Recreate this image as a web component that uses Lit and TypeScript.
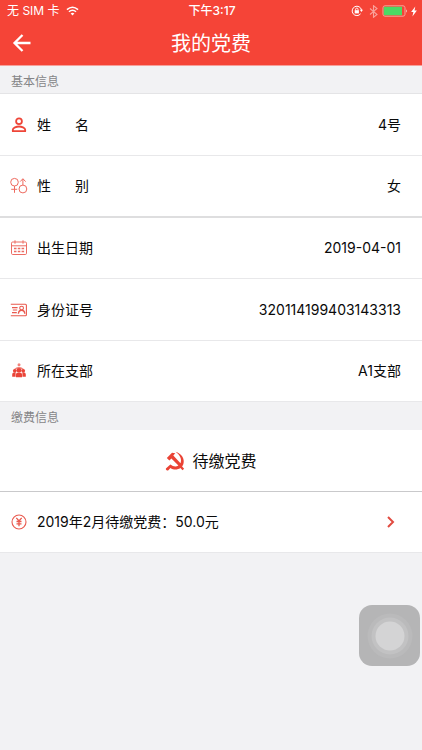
import { LitElement, html, css, svg } from "lit";
import { customElement } from "lit/decorators.js";
import { classMap } from "lit/directives/class-map.js";

type IconName = "person" | "gender" | "calendar" | "card" | "group" | "yen";

interface Field {
  icon: IconName;
  label: string[];
  value: string;
  tall?: boolean;
  band?: boolean;
}

const icons = {
  person: svg`<g fill="none" stroke="#ee4538" stroke-width="1.8"><circle cx="9" cy="5.2" r="2.9"/><path d="M2.800 15.200v-1.500c0-2.100 3.800-3.200 6.200-3.200s6.200 1.100 6.200 3.200v1.500z" stroke-linejoin="round"/></g>`,
  gender: svg`<g fill="none" stroke="#ee6a5f" stroke-width="1"><circle cx="4.500" cy="5.200" r="3.800"/><path d="M4.500 9v6.800M1.200 12.300h6"/><circle cx="12.900" cy="12" r="3.900"/><path d="M12.900 8V2M10.200 4.600l2.700-2.900 2.700 2.900"/></g>`,
  calendar: svg`<g fill="none" stroke="#ec6c63" stroke-width="1"><rect x="1.500" y="3" width="15" height="12.500" rx="1.200"/><path d="M1.500 6.800h15M5 1.300v3.400M13 1.300v3.400"/><path d="M4 9.600h10.500M4 12.400h10.500" stroke-width="1.500" stroke-dasharray="2.500 1.300"/></g>`,
  card: svg`<g fill="none" stroke="#e9594e" stroke-width="1.1"><path d="M.8 3.200h14.600q1 0 1 1v9.600q0 1-1 1H.8M2 6.600h5.600M2.800 9h4.400M2 11.600h4.800"/><circle cx="11.600" cy="7.100" r="1.900"/><path d="M8.400 12.800c.2-2.200 1.200-3.500 3.200-3.500s3 1.300 3.200 3.500" stroke-width="1.400"/></g>`,
  group: svg`<g fill="#ea4438"><circle cx="9" cy="2.800" r="1.500" fill="#f0837b"/><path d="M3.800 7.200Q9 2.200 14.200 7.200l-1 .8Q9 5 4.800 8z" fill="#f0837b"/><circle cx="4.800" cy="8.800" r="1.900"/><circle cx="13.200" cy="8.800" r="1.900"/><circle cx="9" cy="8.300" r="2.400"/><path d="M2.200 14.800v-2.400q0-1.800 1.800-1.800h1.600v4.200zM12.400 10.600H14q1.800 0 1.800 1.800v2.400h-3.400zM6 15.200v-2.800q0-1.600 1.400-1.600h3.200q1.400 0 1.400 1.600v2.800z"/></g>`,
  yen: svg`<g fill="none" stroke="#e9594e"><circle cx="9" cy="9" r="7" stroke-width="1.100"/><path d="M6.300 4.800L9 8l2.700-3.200M9 8v5.200M6.500 8.500h5M6.500 10.800h5" stroke-width="1.300"/></g>`,
};

const fields: Field[] = [
  { icon: "person", label: ["姓", "名"], value: "4号", tall: true },
  { icon: "gender", label: ["性", "别"], value: "女", tall: true, band: true },
  { icon: "calendar", label: ["出生日期"], value: "2019-04-01" },
  { icon: "card", label: ["身份证号"], value: "320114199403143313", tall: true },
  { icon: "group", label: ["所在支部"], value: "A1支部" },
];

@customElement("app-root")
export class AppRoot extends LitElement {
  static styles = css`
    :host {
      display: block;
      min-height: 100vh;
      background: #f2f2f4;
      color: #0a0a0a;
      font-family: Inter, "Noto Sans CJK SC", sans-serif;
      font-size: 14px;
      line-height: 20px;
    }
    * { box-sizing: border-box; }
    svg { display: block; flex: none; }
    h1, h2, h3, dl, dt, dd { margin: 0; font-weight: 400; }
    .top {
      background: #f54437;
      color: #fff;
      border-bottom: 1px solid #f6a09a;
    }
    .status {
      display: grid;
      grid-template-columns: 1fr auto 1fr;
      align-items: center;
      height: 20px;
      padding: 2px 5px 0 7px;
      font-size: 12px;
      line-height: 18px;
    }
    .carrier, .indicators { display: flex; align-items: center; gap: 6px; }
    .indicators { justify-content: flex-end; gap: 3px; }
    .time { font-weight: 500; }
    .nav {
      display: grid;
      grid-template-columns: 44px 1fr 44px;
      align-items: center;
      height: 45px;
    }
    .nav h1 { padding-top: 2px; text-align: center; font-size: 20px; line-height: 28px; }
    .back {
      display: grid;
      place-items: center;
      height: 44px;
      padding: 0;
      border: 0;
      background: none;
      color: inherit;
    }
    .heading {
      height: 28px;
      padding: 6px 11px 0;
      border-bottom: 1px solid #e4e4e6;
      color: #858587;
      font-size: 12px;
      line-height: 20px;
    }
    section + section .heading { border-bottom-color: transparent; }
    .row {
      display: flex;
      align-items: center;
      gap: 9px;
      width: 100%;
      height: 61px;
      padding: 0 21px 0 10px;
      background: #fff;
      border-bottom: 1px solid #e8e8ea;
      color: inherit;
      text-decoration: none;
    }
    .tall { height: 62px; }
    .band { border-bottom: 2px solid #dededf; }
    .label { display: flex; justify-content: space-between; width: 56px; }
    .split { width: 52px; }
    .value { margin-left: auto; }
    .grow { flex: 1; }
    .center {
      justify-content: center;
      gap: 7px;
      padding: 0 10px;
      border-bottom-color: #c9c9cb;
    }
    .center h3 { font-size: 16px; line-height: 24px; }
    .assist {
      position: fixed;
      right: 2px;
      bottom: 84px;
      display: grid;
      place-items: center;
      width: 61px;
      height: 61px;
      padding: 0;
      border: 0;
      border-radius: 13px;
      background: #b5b5b6;
    }
  `;

  private icon(name: IconName) {
    return html`<svg width="18" height="18" viewBox="0 0 18 18" aria-hidden="true">${icons[name]}</svg>`;
  }

  private field(f: Field) {
    return html`<div class=${classMap({ row: true, tall: !!f.tall, band: !!f.band })}>
      ${this.icon(f.icon)}
      <dt class=${classMap({ label: true, split: f.label.length > 1 })}>${f.label.map((t) => html`<span>${t}</span>`)}</dt>
      <dd class="value">${f.value}</dd>
    </div>`;
  }

  render() {
    return html`
      <header class="top">
        <div class="status">
          <div class="carrier">
            <span>无 SIM 卡</span>
            <svg width="13" height="10" viewBox="0 0 14 10" fill="none" stroke="#fff" stroke-width="1.7" aria-hidden="true">
              <path d="M1 3.500Q7-1.500 13 3.500M3.200 5.800Q7 2.700 10.800 5.800" />
              <path d="M5 7.600Q7 6 9 7.600L7 9.800z" fill="#fff" stroke="none" />
            </svg>
          </div>
          <span class="time">下午3:17</span>
          <div class="indicators">
            <svg width="14" height="12" viewBox="0 0 14 12" fill="none" stroke="#fff" aria-hidden="true">
              <path d="M9.600 8.800A4.700 4.700 0 1 1 10.500 5" />
              <path d="M8.800 4.800h3.200l-1.600 2.200z" fill="#fff" stroke="none" />
              <rect x="3.700" y="5.200" width="4.200" height="3.200" fill="#fff" stroke="none" />
              <path d="M4.600 5.400V4.300q0-1.200 1.200-1.200T7 4.300v1.100" stroke-width=".9" />
            </svg>
            <svg width="11" height="13" viewBox="-1 0 11 13" fill="none" stroke="#f9a29b" stroke-width="1.1" aria-hidden="true">
              <path d="M1 3.500l7 6-3.500 2.800V.7L8 3.500l-7 6" />
            </svg>
            <svg width="26" height="12" viewBox="0 0 26 12" aria-hidden="true">
              <rect x="1" y=".8" width="22" height="10.400" rx="2" fill="none" stroke="#f9a29b" />
              <path d="M2.500 1.800H20v8.400H2.500q-.7 0-.7-.7v-7q0-.7.7-.7z" fill="#4cd964" />
              <path d="M24.200 4.200q1.500 1.800 0 3.600z" fill="#fff" />
            </svg>
            <svg width="6" height="11" viewBox="0 0 6 11" aria-hidden="true">
              <path d="M4.300.5L.1 6h2.300l-1 4.600L5.900 4.600H3.500z" fill="#fff" />
            </svg>
          </div>
        </div>
        <nav class="nav">
          <button class="back" aria-label="返回">
            <svg width="20" height="20" viewBox="0 0 20 20" fill="none" stroke="#fff" stroke-width="2.300" aria-hidden="true">
              <path d="M18.500 10H3M10.500 2L2.500 10l8 8" />
            </svg>
          </button>
          <h1>我的党费</h1>
        </nav>
      </header>
      <main>
        <section>
          <h2 class="heading">基本信息</h2>
          <dl>${fields.map((f) => this.field(f))}</dl>
        </section>
        <section>
          <h2 class="heading">缴费信息</h2>
          <div class="row tall center">
            <svg width="20" height="20" viewBox="0 0 20 20" aria-hidden="true">
              <path d="M10.500.8C16.500 2.500 20 8 18.400 13c-.3 1-.7 1.800-1.300 2.500l2 2.200-1.600 1.600-2.100-2.200c-3 2-7 2-10-.2l-2 2.300q-1.500.8-2.500-.6-.4-1.200.8-1.900l2.500-2.100 1.200-1.100c2.800 2.300 5.800 2.500 8 1l-7-7-2 2L1.800 7 7 1.700l3.300.6-2 2.200 7.200 7.800C17.200 8.400 15 4 10.500.8z" fill="#ea4335" />
            </svg>
            <h3>待缴党费</h3>
          </div>
          <a class="row" href="#bill">
            ${this.icon("yen")}
            <span class="grow">2019年2月待缴党费：50.0元</span>
            <svg width="20" height="14" viewBox="0 0 20 14" fill="none" stroke="#e14b40" stroke-width="2" aria-hidden="true">
              <path d="M7 2l5 5-5 5" />
            </svg>
          </a>
        </section>
      </main>
      <button class="assist" aria-label="辅助触控">
        <svg width="46" height="46" viewBox="0 0 46 46" aria-hidden="true">
          <circle cx="23" cy="23" r="22.500" fill="#bababb" />
          <circle cx="23" cy="23" r="18.500" fill="#c2c2c3" />
          <circle cx="23" cy="23" r="14.500" fill="#d4d4d5" />
        </svg>
      </button>
    `;
  }
}
